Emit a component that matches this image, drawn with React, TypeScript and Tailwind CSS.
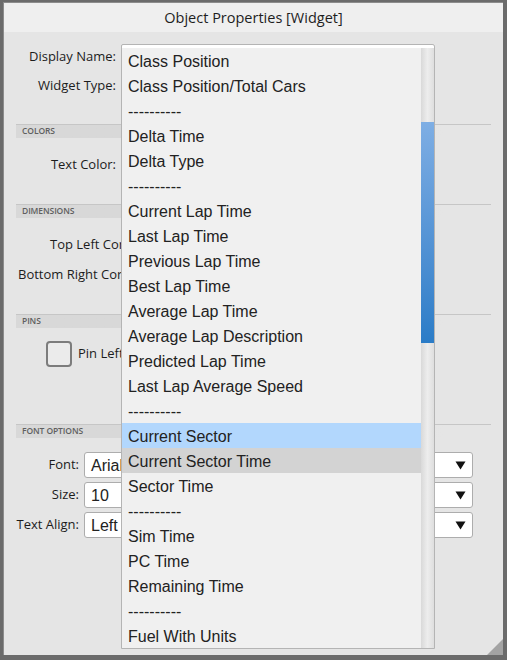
import React from "react";

const items: { t: string; hl?: "blue" | "gray" }[] = [
  { t: "Class Position" },
  { t: "Class Position/Total Cars" },
  { t: "----------" },
  { t: "Delta Time" },
  { t: "Delta Type" },
  { t: "----------" },
  { t: "Current Lap Time" },
  { t: "Last Lap Time" },
  { t: "Previous Lap Time" },
  { t: "Best Lap Time" },
  { t: "Average Lap Time" },
  { t: "Average Lap Description" },
  { t: "Predicted Lap Time" },
  { t: "Last Lap Average Speed" },
  { t: "----------" },
  { t: "Current Sector", hl: "blue" },
  { t: "Current Sector Time", hl: "gray" },
  { t: "Sector Time" },
  { t: "----------" },
  { t: "Sim Time" },
  { t: "PC Time" },
  { t: "Remaining Time" },
  { t: "----------" },
  { t: "Fuel With Units" },
];

const ui = { fontFamily: '"Open Sans", "Noto Sans", sans-serif' };
const arial = { fontFamily: '"Liberation Sans", Arial, sans-serif' };

function Header({ label }: { label: string }) {
  return (
    <div
      className="h-[14px] border-t border-[#c6c6c6] bg-linear-to-r from-[#d8d8d8] from-30% to-transparent to-90% pl-[6px] flex items-center text-[8.5px] font-semibold text-[#5f5f5f] leading-none tracking-[-0.1px]"
      style={ui}
    >
      {label}
    </div>
  );
}

function Select({ value }: { value: string }) {
  return (
    <div className="flex-1 h-[26px] bg-white border border-[#adadad] rounded-[3px] flex items-center justify-between pl-[6px] pr-[6px]">
      <span className="text-[16px] text-[#222] pt-[2px]" style={arial}>
        {value}
      </span>
      <svg width="11" height="9" viewBox="0 0 11 9">
        <path d="M0.5 0.5 L10.5 0.5 L5.5 8.5 Z" fill="#111" />
      </svg>
    </div>
  );
}

export default function App() {
  return (
    <div className="relative w-[507px] h-[660px] bg-[#6b6b6b] pt-[2px] pl-[3px] pr-[4px] pb-[5px]">
      <div className="w-full h-full flex flex-col bg-[#e5e5e5] border-t border-l border-[#8c8c8c]">
        {/* title bar */}
        <div
          className="h-[29px] shrink-0 bg-[#efefef] flex items-center justify-center text-[14.5px] text-[#1e1e1e]"
          style={ui}
        >
          Object Properties [Widget]
        </div>

        {/* body */}
        <div className="flex-1 flex flex-col px-[12px] pt-[12px] text-[13px] text-[#1c1c1c]" style={ui}>
          <div className="flex items-center h-[26px] gap-[5px]">
            <div className="w-[100px] text-right whitespace-nowrap">Display Name:</div>
            <div className="w-[314px] h-[26px] bg-white border border-[#b0b0b0] rounded-[3px]" />
          </div>
          <div className="flex items-center h-[26px] gap-[5px] mt-[3px]">
            <div className="w-[100px] text-right whitespace-nowrap">Widget Type:</div>
          </div>

          <div className="mt-[25px]">
            <Header label="COLORS" />
          </div>
          <div className="flex items-center h-[26px] gap-[5px] mt-[14px]">
            <div className="w-[100px] text-right whitespace-nowrap">Text Color:</div>
          </div>

          <div className="mt-[26px]">
            <Header label="DIMENSIONS" />
          </div>
          <div className="w-[105px] overflow-hidden flex items-center h-[26px] mt-[14px] pl-[34px] whitespace-nowrap">
            Top Left Corner:
          </div>
          <div className="w-[105px] overflow-hidden flex items-center h-[26px] mt-[4px] pl-[2px] whitespace-nowrap">
            Bottom Right Corner:
          </div>

          <div className="mt-[26px]">
            <Header label="PINS" />
          </div>
          <div className="w-[105px] overflow-hidden flex items-center h-[26px] mt-[13px] pl-[30px] gap-[6px] whitespace-nowrap">
            <div className="w-[26px] h-[26px] shrink-0 rounded-[4px] border-2 border-[#7c7c7c] bg-[#ebebeb]" />
            <span>Pin Left Edge</span>
          </div>

          <div className="mt-[57px]">
            <Header label="FONT OPTIONS" />
          </div>
          <div className="flex items-center gap-[5px] mt-[14px] pr-[18px]">
            <div className="w-[63px] text-right">Font:</div>
            <Select value="Arial" />
          </div>
          <div className="flex items-center gap-[5px] mt-[4px] pr-[18px]">
            <div className="w-[63px] text-right">Size:</div>
            <Select value="10" />
          </div>
          <div className="flex items-center gap-[5px] mt-[4px] pr-[18px]">
            <div className="w-[63px] text-right whitespace-nowrap">Text Align:</div>
            <Select value="Left" />
          </div>
        </div>
      </div>

      {/* resize grip */}
      <svg className="absolute right-[4px] bottom-[5px]" width="16" height="16" viewBox="0 0 16 16">
        <path d="M16 0 L16 16 L0 16 Z" fill="#a3a3a3" />
      </svg>

      {/* dropdown popup */}
      <div className="absolute left-[121px] top-[44px] w-[314px] h-[605px] bg-[#f0f0f0] border border-[#b4b4b4] rounded-tr-[3px] rounded-tl-[2px] flex flex-col">
        <div className="h-[3px] bg-white shrink-0 rounded-t-[2px]" />
        <div className="flex flex-1 min-h-0">
          <div className="flex-1 flex flex-col">
            {items.map((it, i) => (
              <div
                key={i}
                className={
                  "h-[25px] shrink-0 flex items-center pl-[6px] pt-[2px] text-[16px] text-[#222] whitespace-nowrap " +
                  (it.hl === "blue" ? "bg-[#b2d7fd]" : it.hl === "gray" ? "bg-[#d3d3d3]" : "")
                }
                style={arial}
              >
                {it.t}
              </div>
            ))}
          </div>
          <div className="w-[13px] shrink-0 flex flex-col bg-linear-to-r from-[#d9d9d9] via-[#ededed] to-[#dedede] pb-[3px]">
            <div className="h-[74px] shrink-0" />
            <div className="h-[221px] shrink-0 bg-linear-to-b from-[#7eaee4] to-[#2a7cc7]" />
          </div>
        </div>
      </div>
    </div>
  );
}
